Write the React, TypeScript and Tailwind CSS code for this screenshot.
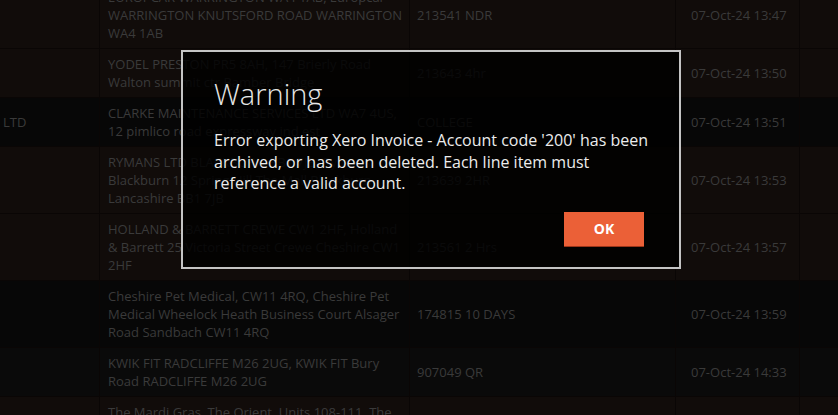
type Row = {
  lead: string;
  address: string[];
  ref: string;
  date: string;
  tone: 'brown' | 'dark' | 'ink';
};

const rows: Row[] = [
  {
    lead: '',
    address: ['EUROPCAR WARRINGTON WA4 1AB, Europcar', 'WARRINGTON KNUTSFORD ROAD WARRINGTON', 'WA4 1AB'],
    ref: '213541 NDR',
    date: '07-Oct-24 13:47',
    tone: 'brown',
  },
  {
    lead: '',
    address: ['YODEL PRESTON PR5 8AH, 147 Brierly Road', 'Walton summit ctr Bamber Bridge'],
    ref: '213643 4hr',
    date: '07-Oct-24 13:50',
    tone: 'brown',
  },
  {
    lead: 'LTD',
    address: ['CLARKE MAINTENANCE SERVICES LTD WA7 4US,', '12 pimlico road expressway ind est'],
    ref: 'COLLEGE',
    date: '07-Oct-24 13:51',
    tone: 'dark',
  },
  {
    lead: '',
    address: ['RYMANS LTD BLACKBURN BB1 7JB, Rymans', 'Blackburn 12 Spring Hill The Mall Blackburn', 'Lancashire BB1 7JB'],
    ref: '213639 2HR',
    date: '07-Oct-24 13:53',
    tone: 'brown',
  },
  {
    lead: '',
    address: ['HOLLAND & BARRETT CREWE CW1 2HF, Holland', '& Barrett 25 Victoria Street Crewe Cheshire CW1', '2HF'],
    ref: '213561 2 Hrs',
    date: '07-Oct-24 13:57',
    tone: 'brown',
  },
  {
    lead: '',
    address: ['Cheshire Pet Medical, CW11 4RQ, Cheshire Pet', 'Medical Wheelock Heath Business Court Alsager', 'Road Sandbach CW11 4RQ'],
    ref: '174815 10 DAYS',
    date: '07-Oct-24 13:59',
    tone: 'dark',
  },
  {
    lead: '',
    address: ['KWIK FIT RADCLIFFE M26 2UG, KWIK FIT Bury', 'Road RADCLIFFE M26 2UG'],
    ref: '907049 QR',
    date: '07-Oct-24 14:33',
    tone: 'ink',
  },
  {
    lead: '',
    address: ['The Mardi Gras, The Orient, Units 108-111, The', 'Trafford Centre Manchester M17 8EH'],
    ref: '213652 4HR',
    date: '07-Oct-24 14:41',
    tone: 'brown',
  },
];

const toneClass = {
  brown: 'bg-[#110c0a]',
  dark: 'bg-[#070707]',
  ink: 'bg-[#0a0a0a]',
};

const JobRow = ({row}: {row: Row}) => (
  <div className={`grid grid-cols-[100px_310px_266px_124px_1fr] border-b border-[#0a0605] ${toneClass[row.tone]}`}>
    <div className="flex items-center border-r border-[#0a0605] pl-[3px]">{row.lead}</div>
    <div className="border-r border-[#0a0605] px-2 py-[6px]">
      {row.address.map((line, i) => (
        <div key={i} className="whitespace-nowrap">{line}</div>
      ))}
    </div>
    <div className="flex items-center border-r border-[#0a0605] px-[7px]">{row.ref}</div>
    <div className="flex items-center border-r border-[#0a0605] pl-[15px]">{row.date}</div>
    <div />
  </div>
);

export default function App() {
  return (
    <div
      className="relative h-[415px] w-[838px] overflow-hidden bg-[#0b0807] text-[13px] leading-[18px] text-[#3a3a3a]"
      style={{fontFamily: '"Open Sans", "Liberation Sans", sans-serif'}}
    >
      <div className="-mt-[18px]">
        {rows.map((row, i) => (
          <JobRow key={i} row={row} />
        ))}
      </div>

      {/* export error dialog */}
      <div className="absolute left-[181px] top-[50px] flex h-[219px] w-[500px] flex-col border-2 border-[#c4c4c4] bg-black/[0.82] pl-[31px] pr-[24px] pt-[22px]">
        <h2 className="text-[29px] font-light leading-[40px] text-[#e6e6e6]">Warning</h2>
        <p className="mt-[16px] text-[16px] leading-[21.5px] text-[#ececec]">
          Error exporting Xero Invoice - Account code '200' has been archived, or has been deleted. Each line item must
          reference a valid account.
        </p>
        <div className="mt-auto mb-[20px] mr-[11px] flex justify-end">
          <button className="h-[35px] w-[80px] border-b border-[#9c3519] bg-[#eb6037] text-[14px] font-bold text-white">
            OK
          </button>
        </div>
      </div>
    </div>
  );
}
